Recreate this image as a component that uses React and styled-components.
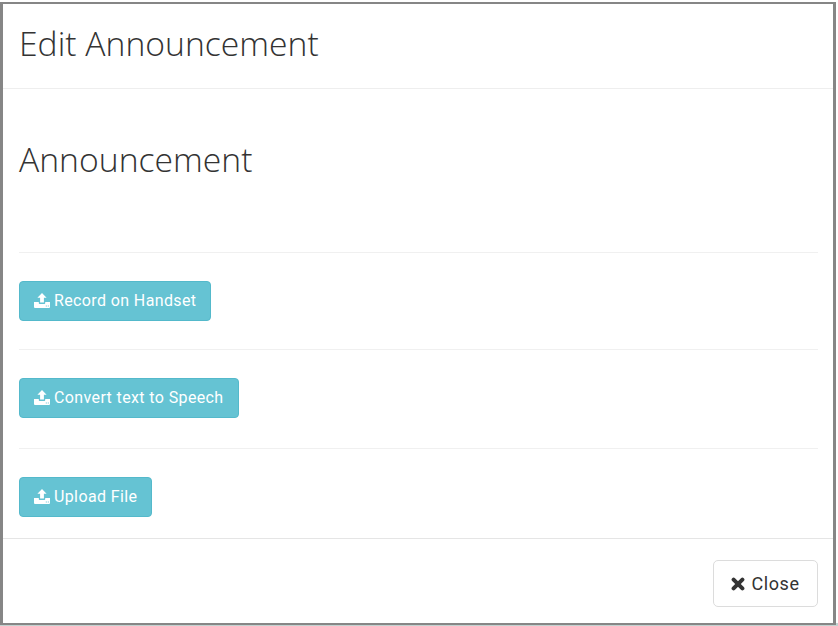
import React from "react";
import styled, { createGlobalStyle } from "styled-components";

const Global = createGlobalStyle`
  html, body { margin: 0; padding: 0; background: #fff; }
  body { width: 838px; height: 626px; overflow: hidden; font-family: "Roboto", sans-serif; }
  #root { height: 626px; }
`;

const Page = styled.div`
  height: 626px;
  box-sizing: border-box;
  padding: 2px 2px 0 0;
  background: linear-gradient(to bottom, #fff 0, #fff 623px, #c3d2d0 623px);
`;

const Modal = styled.div`
  box-sizing: border-box;
  height: 623px;
  border: 2px solid #868686;
  border-left-width: 3px;
  border-right-width: 3px;
  background: #fff;
  display: flex;
  flex-direction: column;
`;

const Header = styled.header`
  box-sizing: border-box;
  height: 85px;
  padding: 0 17px 0 16px;
  display: flex;
  align-items: center;
  border-bottom: 1px solid #eeeeee;
`;

const Title = styled.h4`
  margin: 0 0 4px;
  font: 300 33.7px/1 "Open Sans", sans-serif;
  color: #333;
`;

const Body = styled.main`
  flex: 1;
  padding: 0 15px 0 16px;
  display: flex;
  flex-direction: column;
`;

const Heading = styled.h2`
  margin: 0;
  height: 163px;
  box-sizing: border-box;
  padding-top: 54px;
  font: 300 33.7px/1 "Open Sans", sans-serif;
  color: #333;
`;

const Row = styled.section`
  box-sizing: border-box;
  height: ${(p) => p.$h}px;
  padding-top: 27.6px;
  border-top: 1px solid #f0f0f0;
`;

const ActionButton = styled.button`
  box-sizing: border-box;
  height: 40.5px;
  padding: 0 14px;
  display: inline-flex;
  align-items: center;
  gap: 4px;
  background: #65c3d3;
  border: 1px solid #54b9cb;
  border-radius: 4px;
  color: #fff;
  font: 400 16px/1 "Roboto", sans-serif;
  letter-spacing: 0.38px;
`;

const Footer = styled.footer`
  box-sizing: border-box;
  flex: 0 0 85px;
  padding: 21px 15px 0 0;
  display: flex;
  justify-content: flex-end;
  align-items: flex-start;
  border-top: 1px solid #e5e5e5;
`;

const CloseButton = styled.button`
  box-sizing: border-box;
  width: 105px;
  height: 47px;
  display: inline-flex;
  align-items: center;
  justify-content: center;
  gap: 6px;
  background: #fff;
  border: 1px solid #dcdcdc;
  border-radius: 5px;
  color: #333;
  font: 400 18px/1 "Roboto", sans-serif;
  letter-spacing: 0.6px;
`;

const UploadIcon = () => (
  <svg width="16" height="15" viewBox="0 0 16 15" fill="#fff" aria-hidden="true">
    <path d="M8 0 L12.6 4.8 H9.9 V9.6 H6.1 V4.8 H3.4 Z" />
    <path
      fillRule="evenodd"
      d="M0 9 H4.8 V10.2 Q4.8 11 5.6 11 H10.4 Q11.2 11 11.2 10.2 V9 H16 V14 Q16 15 15 15 H1 Q0 15 0 14 Z M11.8 12.4 h1 v1 h-1 Z M13.8 12.4 h1 v1 h-1 Z"
    />
  </svg>
);

const TimesIcon = () => (
  <svg width="14" height="14" viewBox="0 0 14 14" aria-hidden="true">
    <path d="M2.6 2.6 L11.4 11.4 M11.4 2.6 L2.6 11.4" stroke="#333" strokeWidth="4" strokeLinecap="round" fill="none" />
  </svg>
);

const actions = [
  { label: "Record on Handset", h: 97 },
  { label: "Convert text to Speech", h: 99 },
  { label: "Upload File", h: 90 },
];

export default function App() {
  return (
    <>
      <Global />
      <Page>
        <Modal>
          <Header>
            <Title>Edit Announcement</Title>
          </Header>
          <Body>
            <Heading>Announcement</Heading>
            {actions.map((a) => (
              <Row key={a.label} $h={a.h}>
                <ActionButton>
                  <UploadIcon />
                  {a.label}
                </ActionButton>
              </Row>
            ))}
          </Body>
          <Footer>
            <CloseButton>
              <TimesIcon />
              Close
            </CloseButton>
          </Footer>
        </Modal>
      </Page>
    </>
  );
}
